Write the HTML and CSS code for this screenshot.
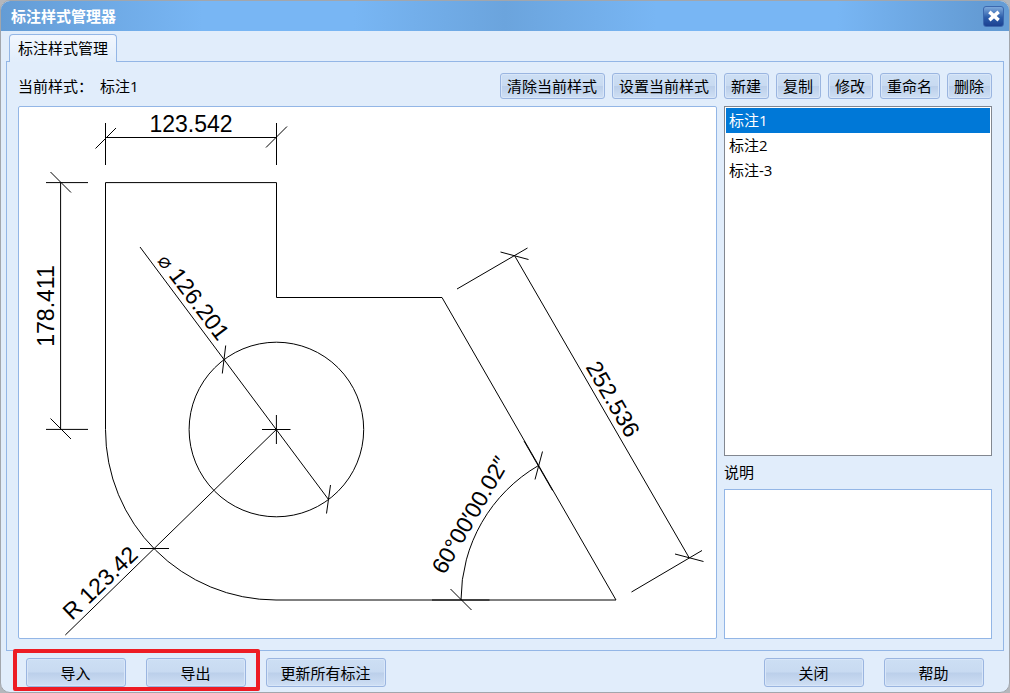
FILE: index.html
```html
<!DOCTYPE html>
<html lang="zh-CN">
<head>
<meta charset="utf-8">
<meta name="viewport" content="width=device-width, initial-scale=1">
<title>标注样式管理器</title>
<link rel="stylesheet" href="styles.css">
</head>
<body>
<main class="dialog">
  <header class="titlebar">
    <h1 class="title">标注样式管理器</h1>
    <button class="close" type="button" aria-label="关闭窗口">
      <svg class="close-icon" viewBox="0 0 12 12" aria-hidden="true"><path d="M2 2.5 10 9.5M10 2.5 2 9.5"/></svg>
    </button>
  </header>

  <div class="tabs" role="tablist">
    <button class="tab" type="button" role="tab" aria-selected="true">标注样式管理</button>
  </div>

  <section class="panel">
    <div class="toolbar">
      <p class="current"><span>当前样式：</span><span>标注1</span></p>
      <button class="btn" type="button">清除当前样式</button>
      <button class="btn" type="button">设置当前样式</button>
      <button class="btn" type="button">新建</button>
      <button class="btn" type="button">复制</button>
      <button class="btn" type="button">修改</button>
      <button class="btn" type="button">重命名</button>
      <button class="btn" type="button">删除</button>
    </div>

    <div class="content">
      <div class="preview">
        <svg class="drawing" viewBox="19 107 697 531" role="img" aria-label="标注预览">
          <g class="lines">
            <path d="M276 600H616L442 297.5H276.5V182.6H105.5V429.5A170.5 170.5 0 0 0 276 600"/>
            <circle cx="276.4" cy="429.5" r="87.3"/>
            <path d="M262 429.5H290.5M276.4 415V444"/>
            <path d="M105.5 123V165M276.5 123V165M105.5 137.5H276.5M95.5 148.5 116 128M266 147.5 287 126.5"/>
            <path d="M46 182.6H88M46 429.4H88M60.6 182.6V429.4M50.5 172 71 192.5M50.5 418.5 71 439"/>
            <path d="M140 247 328.5 499.5M225.7 345.5 222.3 373.5M330.5 485 326.5 513.5"/>
            <path d="M276.4 429.5 65.3 635M140 548.5H169"/>
            <path d="M457 289 527.5 248M514.5 255.5 689 557.5M631.5 592 702 550.5M500.5 252 528.5 259.5M675 554 703.5 561.5"/>
            <path d="M461 600A156 156 0 0 1 538.5 465.5M542.5 451.5 535 479.5M524 441 552.5 490.5M432 600H489.5M450.5 589 471.5 610"/>
          </g>
          <g class="dims">
            <text x="191" y="132">123.542</text>
            <text transform="translate(54 306) rotate(-90)">178.411</text>
            <text class="dim-end" transform="translate(218 342) rotate(53)"><tspan class="dia">⌀</tspan> 126.201</text>
            <text class="dim-start" transform="translate(72 621) rotate(-44)">R 123.42</text>
            <text transform="translate(606 403) rotate(60)">252.536</text>
            <text transform="translate(477 519) rotate(-60)">60°00′00.02″</text>
          </g>
        </svg>
      </div>

      <div class="side">
        <select class="list" size="3" aria-label="标注样式">
          <option selected>标注1</option>
          <option>标注2</option>
          <option>标注-3</option>
        </select>
        <label class="note-label" for="note">说明</label>
        <textarea class="note" id="note"></textarea>
      </div>
    </div>
  </section>

  <footer class="footer">
    <div class="transfer">
      <button class="btn btn-wide" type="button">导入</button>
      <button class="btn btn-wide" type="button">导出</button>
    </div>
    <button class="btn btn-wide btn-update" type="button">更新所有标注</button>
    <div class="actions">
      <button class="btn btn-wide" type="button">关闭</button>
      <button class="btn btn-wide" type="button">帮助</button>
    </div>
  </footer>
</main>
</body>
</html>
```
FILE: styles.css
```css
* {
  box-sizing: border-box;
}

body {
  margin: 0;
  background: #b4b7bc;
}

body,
button,
select,
textarea {
  color: #000;
  font-family: "Open Sans", "Noto Sans CJK SC", sans-serif;
  font-size: 15px;
  line-height: 20px;
}

.dialog {
  display: flex;
  flex-direction: column;
  min-height: 100vh;
  padding: 0 0 5px;
  border: 1px solid #a2a6ac;
  border-radius: 10px;
  background: #e1edfb;
  overflow: hidden;
}

.titlebar {
  display: flex;
  align-items: center;
  justify-content: space-between;
  height: 30px;
  padding: 0 5px 0 10px;
  background: linear-gradient(90deg, #649cd5 0%, #78b6f4 20%, #78b6f4 35%, #6ba4dd 50%, #78b6f4 65%, #78b6f4 83%, #649cd5 97%);
}

.title {
  margin: 0;
  color: #fff;
  font-size: 15px;
  line-height: 20px;
}

.close {
  display: grid;
  place-items: center;
  width: 21px;
  height: 21px;
  padding: 0;
  border: 1px solid #3c68ae;
  border-radius: 3px;
  background: linear-gradient(#7da9dc, #2c5daa 55%, #1c4191);
}

.close-icon {
  width: 14px;
  height: 14px;
  fill: none;
  stroke: #fff;
  stroke-width: 3;
}

.tabs {
  display: flex;
  padding: 3px 8px 0;
}

.tab {
  position: relative;
  height: 28px;
  margin-bottom: -1px;
  padding: 0 8px 2px;
  border: 1px solid #93b6e6;
  border-bottom: 0;
  border-radius: 4px 4px 0 0;
  background: linear-gradient(#f2f7fe, #e1edfb);
}

.panel {
  display: flex;
  flex: 1;
  flex-direction: column;
  gap: 7px;
  margin: 0 5px;
  padding: 11px;
  border: 1px solid #93b6e6;
}

.toolbar {
  display: flex;
  gap: 7px;
}

.current {
  display: flex;
  flex: 1;
  align-items: center;
  gap: 7px;
  margin: 0;
}

.btn {
  height: 26px;
  padding: 0 7px 0 6px;
  border: 1px solid #9ab5e0;
  border-radius: 3px;
  background: linear-gradient(#cddff4, #c8daf1 48%, #bbcfea 52%, #cfdff4);
  box-shadow: inset 0 0 0 1px #d8e6f8;
  white-space: nowrap;
}

.content {
  display: grid;
  flex: 1;
  grid-template-columns: minmax(0, 1fr) 268px;
  gap: 7px;
}

.preview {
  display: flex;
  border: 1px solid #93b6e6;
  border-radius: 2px;
  background: #fff;
}

.drawing {
  width: 100%;
}

.lines {
  fill: none;
  stroke: #000;
  stroke-width: 1;
}

.dims {
  fill: #000;
  font-family: "Liberation Sans", "DejaVu Sans", sans-serif;
  font-size: 23px;
  text-anchor: middle;
}

.dim-start {
  text-anchor: start;
}

.dim-end {
  text-anchor: end;
}

.dia {
  font-family: "DejaVu Sans", sans-serif;
  font-size: 20px;
}

.side {
  display: flex;
  flex-direction: column;
}

.list {
  flex: 1;
  padding: 1px;
  border: 1px solid #828790;
  border-radius: 0;
  outline: 0;
  background: #fff;
  overflow: hidden;
}

.list option {
  min-height: 25px;
  padding: 1px 3px 3px;
  line-height: 21px;
}

.list option:checked {
  background: #0078d7 linear-gradient(#0078d7, #0078d7);
  color: #fff;
}

.note-label {
  padding: 6px 0 7px;
}

.note {
  height: 150px;
  border: 1px solid #93b6e6;
  border-radius: 0;
  resize: none;
}

.footer {
  display: flex;
  align-items: flex-end;
  height: 36px;
  padding: 0 25px 0 12px;
}

.transfer {
  display: flex;
  gap: 20px;
  margin: 0 6px -4px 0;
  padding: 5px 10px 0 9px;
  border: 4px solid #ed1c24;
  border-radius: 2px;
}

.btn-wide {
  min-width: 100px;
  height: 29px;
}

.btn-update {
  min-width: 120px;
}

.actions {
  display: flex;
  gap: 20px;
  margin-left: auto;
}
```
